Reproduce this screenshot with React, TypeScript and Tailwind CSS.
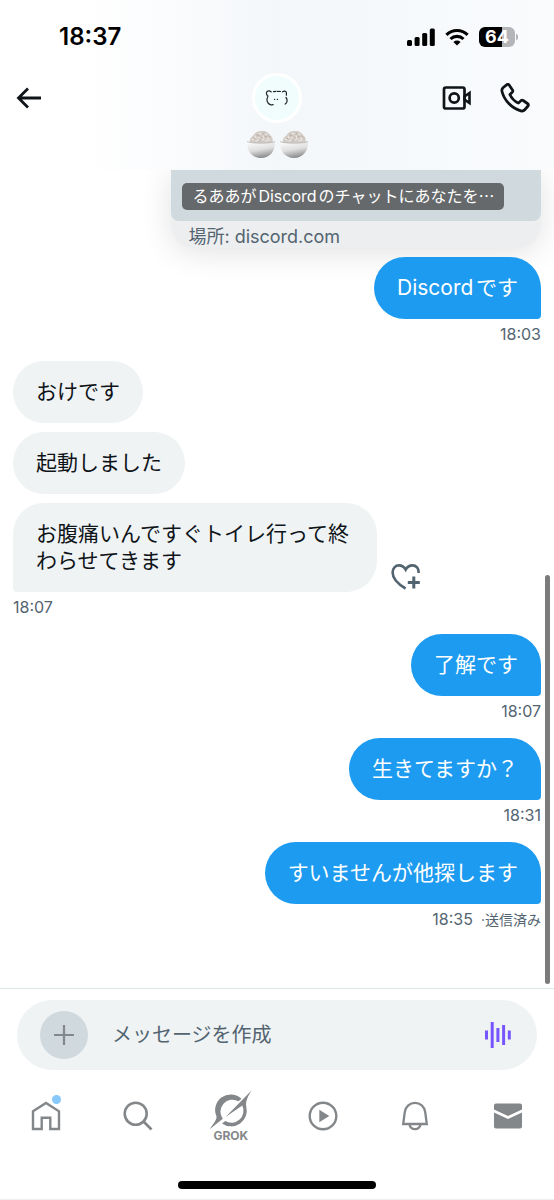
import React, { useState } from 'react';
import clsx from 'clsx';

interface Message {
  id: number;
  text: string;
  mine: boolean;
  time?: string;
  status?: string;
  canReact?: boolean;
}

const messages: Message[] = [
  { id: 1, text: 'Discordです', mine: true, time: '18:03' },
  { id: 2, text: 'おけです', mine: false },
  { id: 3, text: '起動しました', mine: false },
  { id: 4, text: 'お腹痛いんですぐトイレ行って終わらせてきます', mine: false, time: '18:07', canReact: true },
  { id: 5, text: '了解です', mine: true, time: '18:07' },
  { id: 6, text: '生きてますか？', mine: true, time: '18:31' },
  { id: 7, text: 'すいませんが他探します', mine: true, time: '18:35', status: '送信済み' },
];

function SignalIcon() {
  return (
    <svg width="28" height="18" viewBox="0 0 28 18" fill="currentColor" aria-hidden="true">
      <rect x="0" y="12" width="5" height="6" rx="1.5" />
      <rect x="7.6" y="9" width="5" height="9" rx="1.5" />
      <rect x="15.2" y="5" width="5" height="13" rx="1.5" />
      <rect x="22.8" y="0.5" width="5" height="17.5" rx="1.5" />
    </svg>
  );
}

function WifiIcon() {
  return (
    <svg width="24" height="18" viewBox="0 0 24 18" fill="none" stroke="currentColor" strokeWidth="3.1" aria-hidden="true">
      <path d="M1.4 6.8a15.2 15.2 0 0 1 21.2 0" />
      <path d="M5.5 11a9.3 9.3 0 0 1 13 0" />
      <path d="M12 17.6l-3.6-3.7a5.2 5.2 0 0 1 7.2 0z" fill="currentColor" stroke="none" />
    </svg>
  );
}

function Battery() {
  return (
    <div className="flex items-center gap-px">
      <div className="flex h-5 w-9 items-center justify-center rounded-md bg-linear-to-r from-black from-64% to-[#b3b5b8] to-64% text-lg leading-5 font-bold text-white">
        64
      </div>
      <div className="h-1.5 w-0.5 rounded-r-full bg-[#b3b5b8]" />
    </div>
  );
}

function BackIcon() {
  return (
    <svg width="26" height="22" viewBox="0 0 26 22" fill="none" stroke="currentColor" strokeWidth="2.8" aria-hidden="true">
      <path d="M25 11H2.5M12 1.5L2.5 11l9.5 9.5" />
    </svg>
  );
}

function VideoIcon() {
  return (
    <svg width="30" height="24" viewBox="0 0 30 24" fill="none" stroke="currentColor" strokeWidth="2.7" aria-hidden="true">
      <rect x="2" y="1.5" width="20.5" height="21" rx="1.8" />
      <circle cx="12.2" cy="12" r="4.6" />
      <path d="M22.5 10.500l5-3.500v10l-5-3.500z" strokeWidth="2.6" />
    </svg>
  );
}

function PhoneIcon() {
  return (
    <svg width="30" height="30" viewBox="0 0 24 24" fill="none" stroke="currentColor" strokeWidth="2.2" strokeLinejoin="round" aria-hidden="true">
      <path d="M7.3 1.600L10 5.600c.4.600.3 1.300-.2 1.800L7.900 9.200c1.300 2.900 3.900 5.500 6.800 6.900l2-1.900c.5-.5 1.200-.6 1.800-.2l3.700 2.600c.6.400.7 1.200.2 1.800l-2.600 3c-.8.900-2 1.200-3.100.9C9.400 20.200 3.400 14 1.600 6.800c-.3-1.200.1-2.400 1-3.200l2.900-2.300c.6-.5 1.400-.3 1.800.3z" />
    </svg>
  );
}

function BearAvatar() {
  return (
    <svg width="24" height="18" viewBox="0 0 24 18" fill="none" stroke="#20262a" strokeWidth="1.2" strokeLinecap="round" aria-hidden="true">
      <path d="M2.3 6.500C.5 4.500 1.600 1.600 4 1.800c1 .1 1.600.6 2.200 1" />
      <path d="M8.500 2.600l2.500-.3M12.500 2.300l3 .2M17.500 2.800c1-1 3.400-1.200 3.900.8v2.600" />
      <path d="M3 7c-1.800 3.500-1.200 7.500 2.200 8.600 1 .3 2 .3 3 .1" />
      <path d="M21 8.500c1.700 2 1.500 5-.8 6.600" />
      <path d="M9.500 10.300h.3M12.300 10.300h.3" />
    </svg>
  );
}

function RiceBowl({ id }: { id: string }) {
  return (
    <svg width="30" height="30" viewBox="0 0 30 30" aria-hidden="true">
      <defs>
        <linearGradient id={id} x1="0.3" y1="0" x2="0.6" y2="1">
          <stop offset="0" stopColor="#fbfbfb" />
          <stop offset="0.5" stopColor="#dedede" />
          <stop offset="1" stopColor="#858585" />
        </linearGradient>
      </defs>
      <path d="M4 14C3 9 6 8 8 5.500c2-3 5-4 9-3.500 4 0 6 2.500 7.500 4.500 2.500 2 2.500 4.500 2 7.500z" fill="#d3ccc6" />
      <path d="M6 10l2 1M9 7l1 2M13 4l2 1M12 9l2-1M17 7l1 2M20 5l1 1M22 9l1 2M16 11l2-1M10 12l2-1M20 12l2-1" stroke="#ebe6e2" strokeWidth="1.1" strokeLinecap="round" />
      <path d="M8 9l1 1M11 6l2 1M15 8l1 1M19 8l2-1M23 7l1 1M14 12l1-1M18 4l-1 1" stroke="#aaa29b" strokeWidth="0.8" strokeLinecap="round" />
      <path d="M1 12.500c3 2.200 25 2.200 28 0C29.500 21 24.500 29 15 29S.5 21 1 12.500z" fill={`url(#${id})`} />
      <path d="M1 12.500c3 2.200 25 2.200 28 0" fill="none" stroke="#b5b2b0" strokeWidth="0.8" />
    </svg>
  );
}

function HeartPlusIcon() {
  return (
    <svg width="30" height="28" viewBox="0 0 30 28" fill="none" stroke="currentColor" strokeWidth="2.6" aria-hidden="true">
      <path d="M14.6 24.500C7.500 20.500 1.700 14.500 1.600 8.600 1.500 4 4.500 1.400 8 1.400c3.300 0 5.300 1.800 6.700 4.300C16 3.200 18.200 1.400 21.400 1.400c3.800 0 6.600 2.800 6.300 7.600" />
      <path d="M22.8 12.500v12M16.800 18.500h12" strokeWidth="3" />
    </svg>
  );
}

function VoiceIcon() {
  return (
    <svg width="26" height="26" viewBox="0 0 26 26" fill="currentColor" aria-hidden="true">
      <rect x="0" y="8.5" width="3" height="9" />
      <rect x="5.7" y="0" width="3" height="26" />
      <rect x="11.4" y="6" width="3" height="14" />
      <rect x="17.1" y="3" width="3" height="20" />
      <rect x="22.8" y="8.5" width="3" height="9" />
    </svg>
  );
}

function HomeIcon() {
  return (
    <svg width="30" height="30" viewBox="0 0 30 30" fill="none" stroke="currentColor" strokeWidth="2.4" aria-hidden="true">
      <path d="M2 10.300L15 2l13 8.300V28h-8.700V16.800h-8.600V28H2z" />
    </svg>
  );
}

function SearchIcon() {
  return (
    <svg width="30" height="30" viewBox="0 0 30 30" fill="none" stroke="currentColor" strokeWidth="2.6" aria-hidden="true">
      <circle cx="12.7" cy="12.7" r="11" />
      <path d="M20.500 20.500l8 8" />
    </svg>
  );
}

function GrokIcon() {
  return (
    <svg width="42" height="40" viewBox="0 0 42 40" fill="currentColor" aria-hidden="true">
      {/* upper ring with the tail */}
      <path d="M31.500 8.800A15.600 15.600 0 0 0 6.500 26.500C7 30.500 2.500 34.500 0 39L12.800 28.800A12 12 0 0 1 28.500 11.300z" />
      {/* lower ring with the blade */}
      <path d="M42 0L15.500 27L32.300 15.500A12 12 0 0 1 15.300 31L12 33.400A15.600 15.600 0 0 0 36.300 17C35.300 11.500 37.500 6.500 42 0z" />
    </svg>
  );
}

function PlayIcon() {
  return (
    <svg width="30" height="30" viewBox="0 0 30 30" fill="none" stroke="currentColor" strokeWidth="2.4" aria-hidden="true">
      <circle cx="15" cy="15" r="13.3" />
      <path d="M11.300 8.800l10 6.200-10 6.200z" fill="currentColor" stroke="none" />
    </svg>
  );
}

function BellIcon() {
  return (
    <svg width="28" height="30" viewBox="0 0 28 30" fill="none" stroke="currentColor" strokeWidth="2.3" aria-hidden="true">
      <path d="M2.200 23l1.600-12C4.600 5.500 8.800 1.800 14 1.800S23.400 5.500 24.200 11l1.600 12z" />
      <path d="M8.500 23.500a5.600 5.600 0 0 0 11 0" />
    </svg>
  );
}

function MailIcon() {
  return (
    <svg width="30" height="26" viewBox="0 0 30 26" fill="currentColor" aria-hidden="true">
      <path d="M1 2.500C1 1.200 1.700.5 3 .5h24c1.300 0 2 .7 2 2V6.500L15 13 1 6.500z" />
      <path d="M1 9.500L15 16l14-6.500v14c0 1.300-.7 2-2 2H3c-1.300 0-2-.7-2-2z" />
    </svg>
  );
}

function ChatHeader() {
  return (
    <header className="relative z-10 bg-linear-to-r from-white from-15% via-[#f4f7fa] via-50% to-[#f9fbfd] pb-2.5">
      <div className="flex h-18 items-center justify-between pt-0.5 pr-9 pl-[59px] text-black">
        <span className="text-2xl leading-7 font-semibold">18:37</span>
        <div className="flex items-center gap-2.5">
          <SignalIcon />
          <WifiIcon />
          <Battery />
        </div>
      </div>
      <div className="grid h-13 grid-cols-[1fr_auto_1fr] items-center pr-6 pl-4 text-[#0f1419]">
        <button type="button" aria-label="戻る" className="justify-self-start">
          <BackIcon />
        </button>
        <div className="ml-2 flex size-[50px] items-center justify-center rounded-full border-3 border-white bg-[#f1fdfd]">
          <BearAvatar />
        </div>
        <div className="flex items-center gap-7 justify-self-end">
          <button type="button" aria-label="ビデオ通話">
            <VideoIcon />
          </button>
          <button type="button" aria-label="音声通話">
            <PhoneIcon />
          </button>
        </div>
      </div>
      <h1 className="mt-1 flex h-8 items-center justify-center gap-[3px]">
        <RiceBowl id="bowl-left" />
        <RiceBowl id="bowl-right" />
      </h1>
    </header>
  );
}

function LinkCard() {
  return (
    <a
      href="https://discord.com"
      className="block w-[70%] self-end overflow-hidden rounded-b-3xl bg-[#eceeef] shadow-[0_4px_32px_rgba(0,0,0,0.12)]"
    >
      <div className="rounded-b-lg bg-[#cfd9de] px-[11px] pt-[13px] pb-[11px]">
        <div className="w-fit max-w-full truncate rounded-[5px] bg-[#66696b] px-2.5 text-base leading-[27px] text-white">
          るああがDiscordのチャットにあなたを
          <span className="font-['Noto_Sans_CJK_JP',sans-serif] leading-4">…</span>
        </div>
      </div>
      <div className="h-[27px] px-[17px] pt-1 text-lg leading-6 text-[#536471]">場所: discord.com</div>
    </a>
  );
}

function MessageRow({ message }: { message: Message }) {
  const { text, mine, time, status, canReact } = message;

  return (
    <li className={clsx('flex flex-col', mine ? 'items-end' : 'items-start', time ? 'pb-[17px]' : 'pb-[9px]')}>
      <div className="flex w-full items-end gap-3.5">
        <p
          className={clsx(
            'max-w-[69%] rounded-[31px] px-[23px] pt-[17px] pb-[18px] text-[21px] leading-[27px]',
            mine ? 'ml-auto rounded-br-sm bg-[#1d9bf0] text-white' : 'bg-[#eff3f4] text-[#0f1419]',
            !mine && time && 'rounded-bl-sm'
          )}
        >
          {text}
        </p>
        {canReact && (
          <button type="button" aria-label="リアクションを追加" className="text-[#536471]">
            <HeartPlusIcon />
          </button>
        )}
      </div>
      {time && (
        <div className="mt-[5px] text-base leading-5 text-[#536471]">
          {time}
          {status && <span className="ml-2 text-sm leading-5">·{status}</span>}
        </div>
      )}
    </li>
  );
}

function Composer() {
  const [draft, setDraft] = useState('');

  return (
    <form className="border-t border-[#dfe6ea] px-[17px] pt-[11px]" onSubmit={e => e.preventDefault()}>
      <div className="flex h-[70px] items-center rounded-full bg-[#eff3f4] pr-[26px] pl-[23px]">
        <button
          type="button"
          aria-label="追加"
          className="flex size-12 shrink-0 items-center justify-center rounded-full bg-[#cfd9de] text-[#84888c]"
        >
          <svg width="20" height="20" viewBox="0 0 20 20" stroke="currentColor" strokeWidth="2.2" aria-hidden="true">
            <path d="M10 0v20M0 10h20" />
          </svg>
        </button>
        <input
          type="text"
          aria-label="メッセージを作成"
          placeholder="メッセージを作成"
          value={draft}
          onChange={e => setDraft(e.target.value)}
          className="ml-6 h-10 min-w-0 flex-1 text-xl text-[#0f1419] outline-none placeholder:text-[#536471]"
        />
        <button type="button" aria-label="音声メッセージ" className="text-[#7856ff]">
          <VoiceIcon />
        </button>
      </div>
    </form>
  );
}

function TabBar() {
  return (
    <nav className="mt-3 grid h-17 grid-cols-6 items-center justify-items-center text-[#84878a]">
      <a href="#home" aria-label="ホーム" className="relative">
        <HomeIcon />
        <span className="absolute -top-1.5 right-0 size-[9px] rounded-full bg-[#87c9fb]" />
      </a>
      <a href="#search" aria-label="検索">
        <SearchIcon />
      </a>
      <a href="#grok" className="flex flex-col items-center text-xs leading-3 font-bold">
        <GrokIcon />
        GROK
      </a>
      <a href="#video" aria-label="動画">
        <PlayIcon />
      </a>
      <a href="#notifications" aria-label="通知">
        <BellIcon />
      </a>
      <a href="#messages" aria-label="メッセージ">
        <MailIcon />
      </a>
    </nav>
  );
}

export default function App() {
  return (
    <div
      lang="ja"
      className="flex min-h-screen flex-col border-b border-[#eceeef] bg-white font-['Inter','Noto_Sans_CJK_JP',sans-serif] [text-autospace:normal]"
    >
      <ChatHeader />
      <main className="relative flex flex-1 flex-col px-[13px] pb-10">
        <LinkCard />
        <ul className="mt-[9px]">
          {messages.map(message => (
            <MessageRow key={message.id} message={message} />
          ))}
        </ul>
        {/* scroll thumb */}
        <div className="absolute right-1 bottom-1 h-1/2 w-[5px] rounded-full bg-[#7b7b7b]" />
      </main>
      <Composer />
      <TabBar />
      <div className="mx-auto mt-[31px] mb-2.5 h-2 w-[198px] rounded-full bg-black" />
    </div>
  );
}
